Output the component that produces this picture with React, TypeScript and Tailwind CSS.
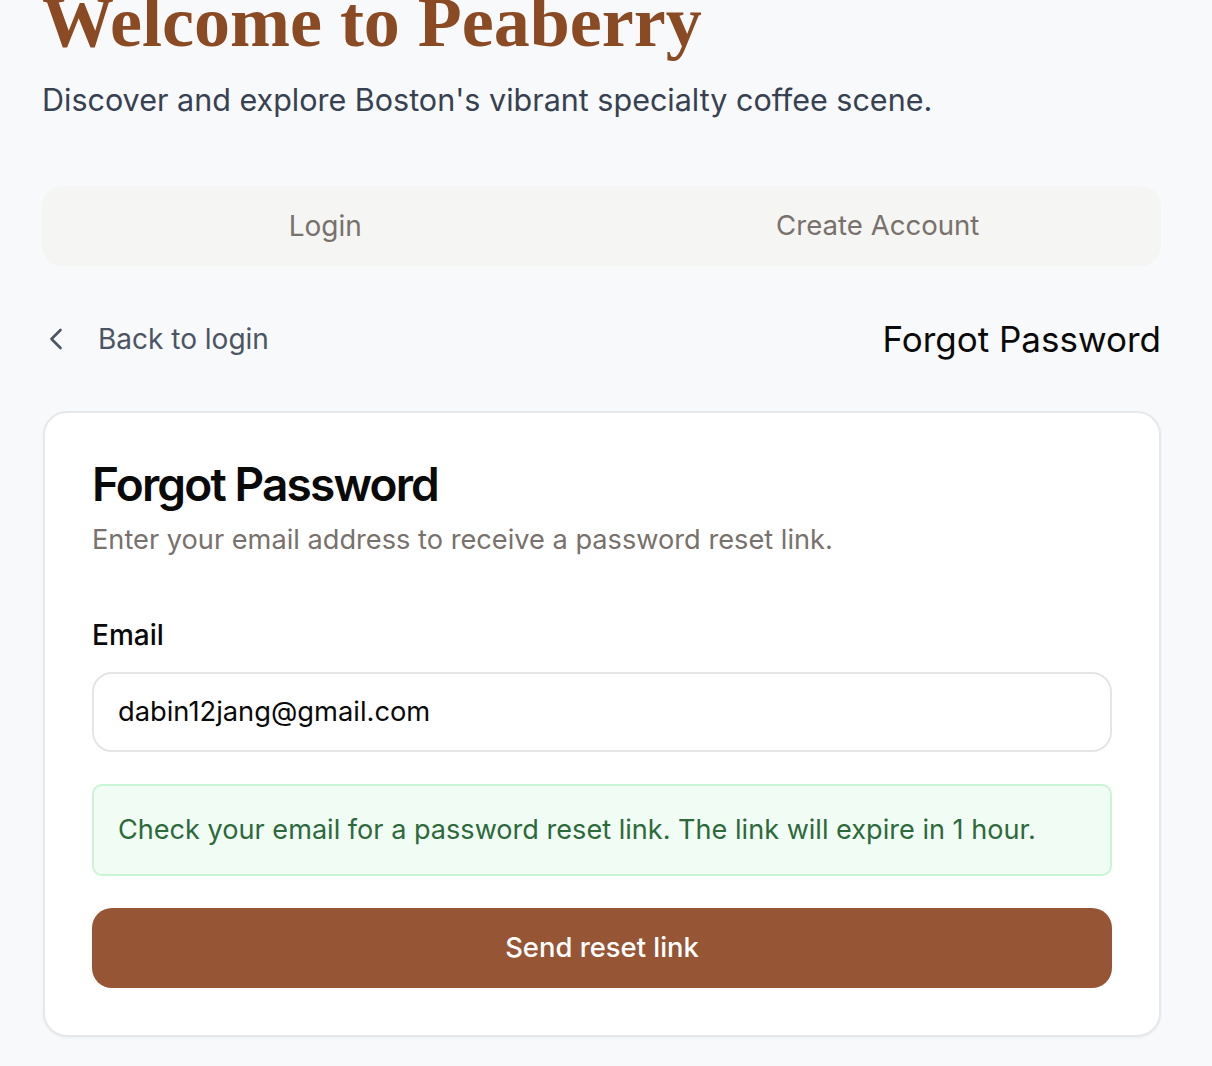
import React from "react";
import { ChevronLeft } from "lucide-react";

const sans = "font-['Inter','Noto_Sans',sans-serif]";

export default function App() {
  return (
    <div className={`min-h-[1066px] w-full bg-[#f8f9fb] ${sans} overflow-hidden`}>
      <div className="px-[42px] pr-[51px]">
        <h1 className="mt-[-14px] font-['Liberation_Serif','Times_New_Roman',serif] text-[72px] font-bold leading-[72px] text-[#8a4b24]">
          Welcome to Peaberry
        </h1>
        <p className="mt-[24px] text-[30.5px] leading-[36px] text-[#374151]">
          Discover and explore Boston's vibrant specialty coffee scene.
        </p>

        <div className="mt-[68px] grid h-[80px] grid-cols-2 rounded-[20px] bg-[#f5f5f3] px-[7px]">
          <button className="flex items-center justify-center text-[28px] text-[#78716c]">Login</button>
          <button className="flex items-center justify-center text-[27.6px] text-[#78716c]">Create Account</button>
        </div>

        <div className="mt-[33px] flex h-[80px] items-center justify-between">
          <button className="flex items-center gap-[24px] text-[28px] text-[#4b5563]">
            <ChevronLeft size={36} strokeWidth={1.75} className="ml-[-4px] text-[#4b5563]" />
            <span>Back to login</span>
          </button>
          <h2 className="text-[35px] text-[#0a0a0a]">Forgot Password</h2>
        </div>

        <div className="ml-[1px] mt-[32px] rounded-[24px] border-2 border-[#e8e8e8] bg-white p-[47px] shadow-[0_1px_3px_rgba(0,0,0,0.05)]">
          <h3 className="text-[46px] font-semibold leading-[48px] tracking-[-0.04em] text-[#0a0a0a]">Forgot Password</h3>
          <p className="mt-[12px] text-[27.2px] leading-[40px] text-[#78716c]">
            Enter your email address to receive a password reset link.
          </p>

          <label className="mt-[55px] block text-[28px] font-medium leading-[40px] text-[#0a0a0a]">Email</label>
          <div className="mt-[17px] flex h-[80px] items-center rounded-[20px] border-2 border-[#e5e5e5] bg-white px-[24px] text-[27.3px] text-[#0a0a0a]">
            dabin12jang@gmail.com
          </div>

          <div className="mt-[32px] rounded-[10px] border-2 border-[#c9f5d6] bg-[#f1fcf4] px-[24px] py-[24px] text-[27.1px] leading-[40px] text-[#2c6a3c]">
            Check your email for a password reset link. The link will expire in 1 hour.
          </div>

          <button className="mt-[32px] flex h-[80px] w-full items-center justify-center rounded-[20px] bg-[#965636] text-[27.4px] font-medium text-white">
            Send reset link
          </button>
        </div>
      </div>
    </div>
  );
}
